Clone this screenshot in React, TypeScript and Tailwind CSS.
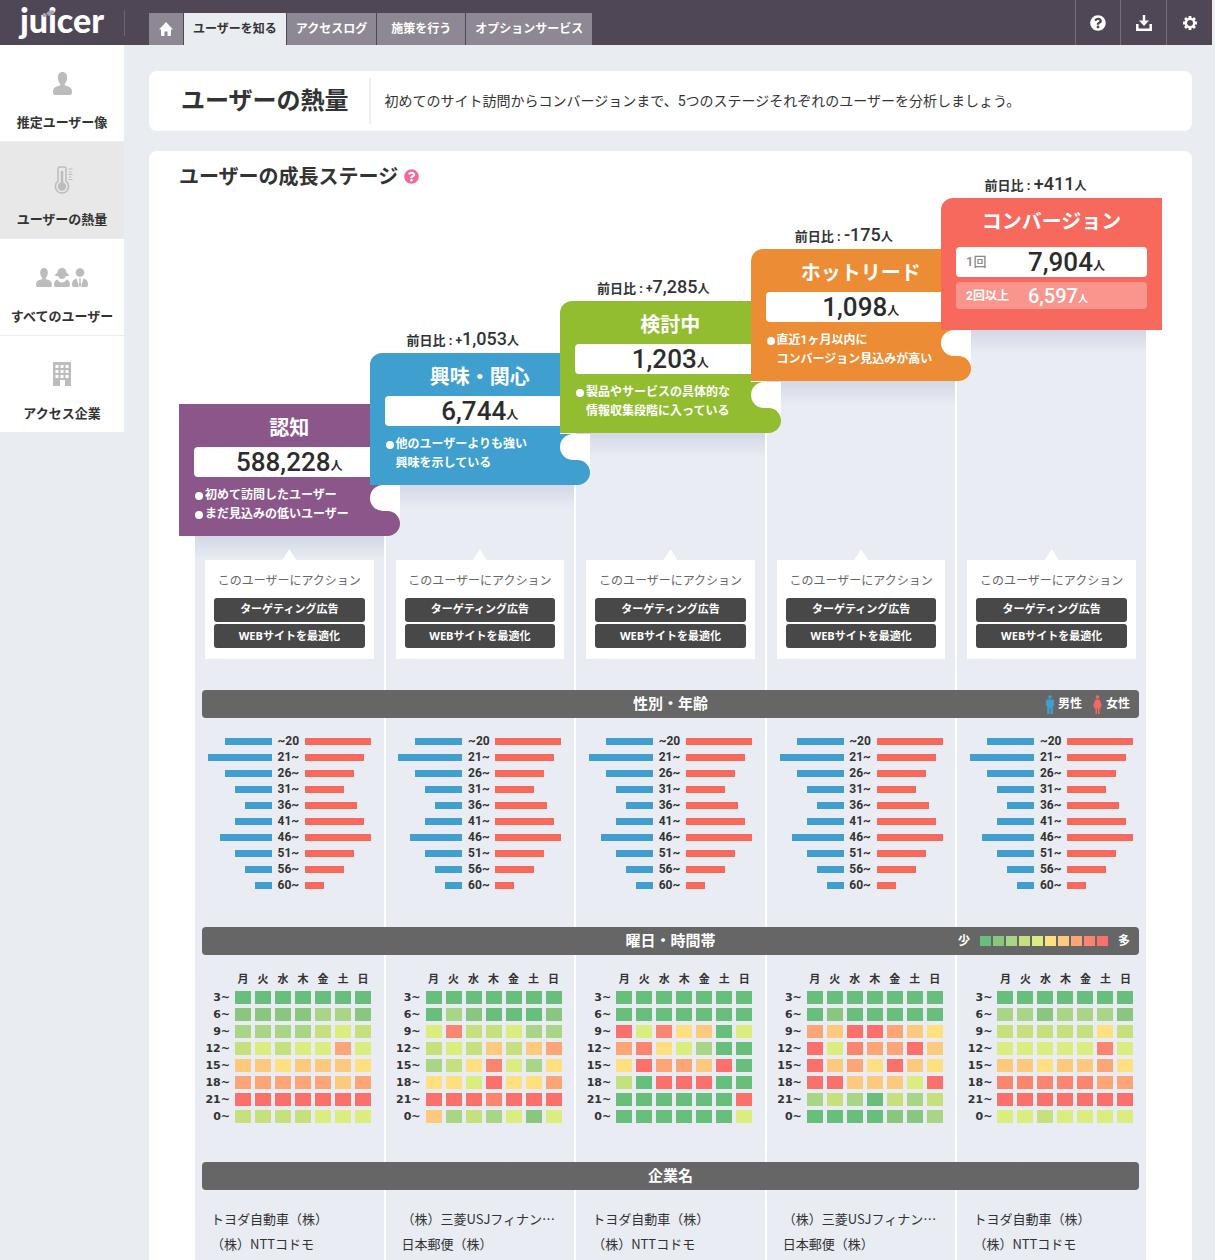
import { Fragment, type ReactNode } from "react";
import { FaQuestionCircle } from "react-icons/fa";

interface Stage {
  title: string;
  count: string;
  sign?: string;
  smallSign?: boolean;
  diff?: string;
  notes: string[];
  bullets: boolean;
  color: string;
  offset: string;
  columnTop: string;
}

const stages: Stage[] = [
  {
    title: "認知",
    count: "588,228",
    notes: ["初めて訪問したユーザー", "まだ見込みの低いユーザー"],
    bullets: true,
    color: "bg-[#8b578b]",
    offset: "mt-[221px]",
    columnTop: "mt-[385px] col-start-1",
  },
  {
    title: "興味・関心",
    count: "6,744",
    sign: "+",
    smallSign: true,
    diff: "1,053",
    notes: ["他のユーザーよりも強い", "興味を示している"],
    bullets: false,
    color: "bg-[#3fa0cf]",
    offset: "mt-[170px]",
    columnTop: "mt-[334px] col-start-2",
  },
  {
    title: "検討中",
    count: "1,203",
    sign: "+",
    smallSign: true,
    diff: "7,285",
    notes: ["製品やサービスの具体的な", "情報収集段階に入っている"],
    bullets: false,
    color: "bg-[#92bd31]",
    offset: "mt-[118px]",
    columnTop: "mt-[282px] col-start-3",
  },
  {
    title: "ホットリード",
    count: "1,098",
    sign: "-",
    diff: "175",
    notes: ["直近1ヶ月以内に", "コンバージョン見込みが高い"],
    bullets: false,
    color: "bg-[#ec8d35]",
    offset: "mt-[66px]",
    columnTop: "mt-[230px] col-start-4",
  },
  {
    title: "コンバージョン",
    count: "7,904",
    sign: "+",
    diff: "411",
    notes: [],
    bullets: false,
    color: "bg-[#f7685d]",
    offset: "mt-[15px]",
    columnTop: "mt-[179px] col-start-5",
  },
];

const ages = [
  { label: "~20", male: 47, female: 66 },
  { label: "21~", male: 64, female: 59 },
  { label: "26~", male: 47, female: 49 },
  { label: "31~", male: 37, female: 39 },
  { label: "36~", male: 27, female: 52 },
  { label: "41~", male: 37, female: 59 },
  { label: "46~", male: 52, female: 66 },
  { label: "51~", male: 37, female: 49 },
  { label: "56~", male: 27, female: 39 },
  { label: "60~", male: 17, female: 19 },
];

const levels = [
  "bg-[#68be7b]",
  "bg-[#88c77d]",
  "bg-[#a9d586]",
  "bg-[#c6e07d]",
  "bg-[#dced80]",
  "bg-[#fee081]",
  "bg-[#fdca7d]",
  "bg-[#fca677]",
  "bg-[#fb866f]",
  "bg-[#f9716a]",
];

const days = ["月", "火", "水", "木", "金", "土", "日"];
const hours = ["3~", "6~", "9~", "12~", "15~", "18~", "21~", "0~"];

// one string per hour, one digit (level) per day
const heat = [
  ["0000000", "1111221", "2222343", "3434474", "6656665", "7777767", "9999999", "3333444"],
  ["0000000", "0210001", "4833422", "3436367", "2358425", "5549557", "9998999", "6232414"],
  ["0000000", "0000000", "9485604", "7854200", "5977690", "3099900", "0000009", "0000004"],
  ["0000000", "0100000", "7699765", "9487796", "9675965", "9966649", "2320323", "0000112"],
  ["0000000", "2212221", "3333353", "4444484", "6656675", "8888877", "9999999", "4434444"],
];

const toyota = ["トヨダ自動車（株）", "（株）NTTコドモ"];
const mitsubishi = ["（株）三菱USJフィナン…", "日本郵便（株）"];
const companies = [toyota, mitsubishi, toyota, mitsubishi, toyota];

function PersonIcon({ className }: { className?: string }) {
  return (
    <svg viewBox="0 0 20 24" className={className} fill="currentColor">
      <path d="M10 0c3 0 4.800 2.300 4.800 5.800 0 3-1 5.200-2.500 6.600v1.800c4.200.7 7.700 2 7.700 6.800 0 2-.6 3-2.400 3H2.400C.6 24 0 23 0 21c0-4.800 3.500-6.100 7.700-6.800v-1.800C6.200 11 5.200 8.800 5.200 5.800 5.200 2.300 7 0 10 0z" />
    </svg>
  );
}

function ThermometerIcon() {
  return (
    <svg viewBox="0 0 20 28" className="ml-1 h-7 w-5" fill="none" stroke="#bcbcbc">
      <path
        d="M4 2.500Q4 1 5.500 1h5Q12 1 12 2.500V15.200a6.600 6.600 0 1 1-8 0z"
        strokeWidth="1.500"
      />
      <path d="M8 5v15" strokeWidth="2.500" />
      <circle cx="8" cy="20.500" r="4.200" fill="#bcbcbc" stroke="none" />
      <path d="M14.500 3h4M15 6h2.500M14.500 8.500h4M15 11h2.500M14.500 13.500h4" />
    </svg>
  );
}

function PeopleIcon() {
  return (
    <div className="flex gap-0.5">
      <PersonIcon className="h-[19px] w-4" />
      <svg viewBox="0 0 16 19" className="h-[19px] w-4" fill="currentColor">
        <path d="M8 0c2.700 0 4.200 1.500 4.500 4.500l2.800 2.700c-1 1-2.400 1-3.500.8C11.300 9.700 10 11 8 11S4.700 9.700 4.200 8C3.100 8.200 1.700 8.200.7 7.200l2.800-2.700C3.800 1.500 5.300 0 8 0z" />
        <path d="M3.500 11.500C4.500 13.600 6 14.500 8 14.500s3.500-.9 4.500-3c2.300.9 3.500 2.500 3.500 5 0 1.800-.5 2.500-1.800 2.500H1.800C.5 19 0 18.300 0 16.500c0-2.500 1.200-4.100 3.500-5z" />
      </svg>
      <svg viewBox="0 0 16 19" className="h-[19px] w-4" fill="currentColor">
        <circle cx="8" cy="4.500" r="4.300" />
        <path d="M4.500 10.500L7 19H1.800C.5 19 0 18.300 0 16.500c0-3.500 1.500-5.300 4.500-6zM11.500 10.500L9 19h5.200c1.300 0 1.800-.7 1.800-2.500 0-3.500-1.500-5.300-4.500-6zM7 10.500h2l-.4 2.500.6 4L8 19l-1.200-2 .6-4z" />
      </svg>
    </div>
  );
}

function BuildingIcon() {
  return (
    <svg viewBox="0 0 18 24" className="h-6 w-[18px]">
      <path d="M0 0h18v24h-6v-6H7v6H0z" fill="#bcbcbc" />
      {[3, 8, 13].map((y) =>
        [3, 8, 13].map((x) => (
          <rect key={x + "-" + y} x={x - 0.5} y={y} width="3" height="3" fill="#fff" />
        ))
      )}
    </svg>
  );
}

function HomeIcon() {
  return (
    <svg viewBox="0 0 14 14" className="size-3.5" fill="currentColor">
      <path d="M7 0l7 7.500h-2V13q0 1-1 1H8.500V9.500h-3V14H3q-1 0-1-1V7.500H0z" />
    </svg>
  );
}

function DownloadIcon() {
  return (
    <svg viewBox="0 0 16 16" className="size-4" fill="none" stroke="#fff" strokeWidth="2.500">
      <path d="M1.300 9v5.700h13.400V9" />
      <path d="M8 0v7" />
      <path d="M3 5.500h10L8 11z" fill="#fff" stroke="none" />
    </svg>
  );
}

function GearIcon() {
  return (
    <svg viewBox="0 0 16 16" className="size-3.5" fill="none" stroke="#fff">
      <circle cx="8" cy="8" r="4.800" strokeWidth="2.800" />
      {[0, 45, 90, 135].map((a) => (
        <path key={a} d="M8 0v3M8 13v3" strokeWidth="3.200" transform={`rotate(${a} 8 8)`} />
      ))}
    </svg>
  );
}

function Header() {
  const tabs = ["ユーザーを知る", "アクセスログ", "施策を行う", "オプションサービス"];
  return (
    <header className="mr-[3px] flex h-[45px] bg-[#4f4656] text-white">
      <div className="flex w-[149px] items-center">
        <a
          href="#"
          className="relative flex h-[26px] w-[125px] items-center justify-center border-r border-[#6d6575] pb-1.5 font-[family-name:Lato,sans-serif] text-[34px] leading-none font-black"
        >
          juicer
          {/* leaf on top of the glass */}
          <svg viewBox="0 0 14 8" className="absolute top-0 left-[41px] h-2 w-3.5" fill="#a7a2ab">
            <ellipse cx="9.500" cy="3" rx="4" ry="2.500" transform="rotate(-20 9.500 3)" />
            <circle cx="3.500" cy="5" r="2" />
          </svg>
        </a>
      </div>
      <nav className="mt-[13px] flex gap-px text-xs font-bold">
        <a href="#" aria-label="ホーム" className="flex w-[34px] items-center justify-center bg-[#8d8893]">
          <HomeIcon />
        </a>
        {tabs.map((tab, i) => (
          <a
            key={tab}
            href="#"
            className={
              i === 0
                ? "flex items-center bg-[#e9edf2] px-[9px] text-[#333]"
                : i === 2
                  ? "flex items-center bg-[#8d8893] px-[14px]"
                  : "flex items-center bg-[#8d8893] px-[9px]"
            }
          >
            {tab}
          </a>
        ))}
      </nav>
      <div className="ml-auto flex">
        <button aria-label="ヘルプ" className="flex w-[45px] items-center justify-center border-l border-[#756d7c]">
          <FaQuestionCircle className="size-4" />
        </button>
        <button aria-label="ダウンロード" className="flex w-[46px] items-center justify-center border-l border-[#756d7c]">
          <DownloadIcon />
        </button>
        <button aria-label="設定" className="flex w-[46px] items-center justify-center border-l border-[#756d7c]">
          <GearIcon />
        </button>
      </div>
    </header>
  );
}

function Sidebar() {
  const items: { label: string; icon: ReactNode }[] = [
    { label: "推定ユーザー像", icon: <PersonIcon className="h-[23px] w-[19px]" /> },
    { label: "ユーザーの熱量", icon: <ThermometerIcon /> },
    { label: "すべてのユーザー", icon: <PeopleIcon /> },
    { label: "アクセス企業", icon: <BuildingIcon /> },
  ];
  return (
    <nav className="flex w-[124px] flex-none flex-col">
      {items.map((item, i) => (
        <a
          key={item.label}
          href="#"
          className={
            i === 1
              ? "flex flex-col items-center border-b border-[#e9edf2] bg-[#e8e8e8] pt-[21px] pb-2 text-[13px] leading-5 font-bold text-[#333]"
              : "flex flex-col items-center border-b border-[#e9edf2] bg-white pt-[21px] pb-2 text-[13px] leading-5 font-bold text-[#333]"
          }
        >
          <span className="flex h-[34px] items-center text-[#bcbcbc]">{item.icon}</span>
          <span className="mt-[13px] whitespace-nowrap">{item.label}</span>
        </a>
      ))}
    </nav>
  );
}

function StageCard({ stage, last }: { stage: Stage; last: boolean }) {
  return (
    <div className={`${stage.offset} ${last ? "w-[221px] flex-none" : "min-w-0 flex-1"}`}>
      <div className="h-8 text-center text-[13px] leading-9 font-bold whitespace-nowrap text-[#333]">
        {stage.diff && (
          <span className={last ? "mr-8" : "mr-1"}>
            前日比 :{" "}
            <span className={stage.smallSign ? "text-xs" : "text-lg font-medium"}>{stage.sign}</span>
            <span className="text-lg leading-9 font-medium">{stage.diff}</span>
            <span className="text-xs">人</span>
          </span>
        )}
      </div>
      <div className={`relative h-[132px] text-white ${stage.color} ${stage.sign ? "rounded-tl-xl" : ""}`}>
        {last ? (
          <div className="px-[15px] pt-[9px]">
            <h3 className="text-center text-xl leading-[30px] font-bold">{stage.title}</h3>
            <div className="mt-2.5 flex h-[30px] items-center rounded bg-white pl-2.5 text-[#2c2c2c]">
              <span className="w-[62px] text-[13px] font-medium text-[#888]">1回</span>
              <span className="text-[26px] leading-[30px] font-medium">{stage.count}</span>
              <span className="mt-2 text-xs font-bold">人</span>
            </div>
            <div className="mt-[5px] flex h-[27px] items-center rounded bg-[#fa958e] pl-2.5">
              <span className="w-[62px] text-xs leading-5 font-bold">2回以上</span>
              <span className="text-xl font-medium">6,597</span>
              <span className="mt-1.5 text-[10px] font-bold">人</span>
            </div>
          </div>
        ) : (
          <div className="pt-[9px] pl-[15px]">
            <h3 className="pl-[15px] text-center text-xl leading-[30px] font-bold">{stage.title}</h3>
            <div className="mt-1 flex h-[30px] items-center justify-center rounded-l bg-white pl-[15px] text-[#2c2c2c]">
              <span className="text-[26px] leading-[30px] font-medium">{stage.count}</span>
              <span className="mt-2 text-xs font-bold">人</span>
            </div>
            <ul className="mt-[9px] pl-px text-xs leading-[19px] font-bold whitespace-nowrap">
              {stage.notes.map((note, i) => (
                <li key={note} className="flex items-center gap-0.5">
                  <span className={`size-2 rounded-full ${i === 0 || stage.bullets ? "bg-white" : ""}`} />
                  {note}
                </li>
              ))}
            </ul>
          </div>
        )}
        {/* curl that runs under the next step */}
        {!last && (
          <div className="absolute top-[81px] left-full w-[30px]">
            <div className={`h-[26px] ${stage.color}`}>
              <div className="h-full rounded-l-full bg-white" />
            </div>
            <div className="h-[25px] bg-linear-to-b from-white from-50% to-transparent to-50%">
              <div className={`h-full rounded-r-full ${stage.color}`} />
            </div>
          </div>
        )}
      </div>
    </div>
  );
}

function SectionBar({ title, className, children }: { title: string; className: string; children?: ReactNode }) {
  return (
    <div
      className={`z-10 col-span-full mx-[7px] grid h-7 grid-cols-[1fr_auto_1fr] items-center rounded bg-[#666] px-[9px] text-white ${className}`}
    >
      <h3 className="col-start-2 text-[15px] font-bold">{title}</h3>
      <div className="flex items-center justify-end text-xs font-bold">{children}</div>
    </div>
  );
}

function ActionCard() {
  return (
    <div className="mx-2.5 mt-3">
      <div className="mx-auto h-3 w-3.5 bg-white [clip-path:polygon(50%_10%,100%_100%,0_100%)]" />
      <div className="flex h-[99px] flex-col items-center bg-white px-[9px] pt-[11px]">
        <p className="text-xs leading-5 whitespace-nowrap text-[#666]">このユーザーにアクション</p>
        <button className="mt-[7px] h-6 w-full rounded-[3px] bg-[#484848] text-[11px] leading-6 font-bold text-white">
          ターゲティング広告
        </button>
        <button className="mt-0.5 h-6 w-full rounded-[3px] bg-[#484848] font-[family-name:'Open_Sans','Noto_Sans_CJK_JP',sans-serif] text-[11px] leading-6 font-bold text-white">
          WEBサイトを最適化
        </button>
      </div>
    </div>
  );
}

function AgeChart() {
  return (
    <div className="mt-[15px] grid h-40 grid-cols-[77fr_33px_79fr] items-center text-xs leading-4 font-bold text-[#333]">
      {ages.map((age) => (
        <Fragment key={age.label}>
          <div className="ml-auto h-[7px] bg-[#3fa0cf]" style={{ width: age.male }} />
          <span className="text-center">{age.label}</span>
          <div className="h-[7px] bg-[#f7685d]" style={{ width: age.female }} />
        </Fragment>
      ))}
    </div>
  );
}

function HeatTable({ rows }: { rows: string[] }) {
  return (
    <table className="mt-[15px] w-[178px] table-fixed text-[11px] font-bold text-[#333]">
      <thead>
        <tr className="h-[19px]">
          <td className="w-[38px] p-0" />
          {days.map((d) => (
            <th key={d} className="p-0 leading-[17px]">
              {d}
            </th>
          ))}
        </tr>
      </thead>
      <tbody>
        {rows.map((row, i) => (
          <tr key={hours[i]} className="h-[17px]">
            <th className="p-0 pr-[3px] text-right font-[family-name:'DejaVu_Sans',sans-serif] leading-[17px] whitespace-nowrap">
              {hours[i]}
            </th>
            {row.split("").map((level, j) => (
              <td key={j} className="p-0">
                <div className={`mx-auto h-[13px] w-4 ${levels[Number(level)]}`} />
              </td>
            ))}
          </tr>
        ))}
      </tbody>
    </table>
  );
}

function StagePanel() {
  return (
    <section className="mt-5 grid flex-1 grid-cols-5 grid-rows-[repeat(7,auto)_1fr] gap-x-0.5 rounded-t-lg bg-white px-[46px]">
      {stages.map((stage) => (
        <div
          key={stage.title}
          className={`row-start-1 row-end-9 bg-[#e9ecf2] bg-linear-to-b from-[#d4d8e5] to-[#e9ecf2] to-[24px] ${stage.columnTop}`}
        />
      ))}
      <div className="col-start-1 col-end-4 row-start-1 -ml-4 flex h-[51px] items-center gap-1.5 self-start">
        <h2 className="text-xl font-bold text-[#333]">ユーザーの成長ステージ</h2>
        <FaQuestionCircle className="size-[15px] text-[#f4679d]" />
      </div>
      <div className="z-10 col-span-full row-start-1 -mx-4 flex h-[385px] items-start">
        {stages.map((stage, i) => (
          <StageCard key={stage.title} stage={stage} last={i === stages.length - 1} />
        ))}
      </div>
      <div className="col-span-full row-start-2 grid grid-cols-5 gap-x-0.5">
        {stages.map((stage) => (
          <ActionCard key={stage.title} />
        ))}
      </div>
      <SectionBar title="性別・年齢" className="row-start-3 mt-[31px]">
        <svg viewBox="0 0 8 19" className="h-[19px] w-2" fill="#3fa0cf">
          <circle cx="4" cy="2" r="1.800" />
          <path d="M1 4.500h6l1 1V11H6.800v8H4.500v-6h-1v6H1.200v-8H0V5.500z" />
        </svg>
        <span className="ml-1">男性</span>
        <svg viewBox="0 0 9 19" className="ml-[11px] h-[19px] w-[9px]" fill="#f7685d">
          <circle cx="4.500" cy="2" r="1.800" />
          <path d="M2.500 4.500h4L9 11l-1.500.5L8 13.500H6.500V19H5v-5.500H4V19H2.500v-5.500H1l.5-2L0 11z" />
        </svg>
        <span className="ml-1">女性</span>
      </SectionBar>
      <div className="col-span-full row-start-4 grid grid-cols-5 gap-x-0.5">
        {stages.map((stage) => (
          <AgeChart key={stage.title} />
        ))}
      </div>
      <SectionBar title="曜日・時間帯" className="row-start-5 mt-[34px]">
        <span>少</span>
        <div className="mx-2.5 flex gap-0.5">
          {levels.map((level) => (
            <span key={level} className={`h-2.5 w-[11px] ${level}`} />
          ))}
        </div>
        <span>多</span>
      </SectionBar>
      <div className="col-span-full row-start-6 grid grid-cols-5 gap-x-0.5">
        {heat.map((rows, i) => (
          <HeatTable key={i} rows={rows} />
        ))}
      </div>
      <SectionBar title="企業名" className="row-start-7 mt-[37px]" />
      <div className="col-span-full row-start-8 mt-4 grid grid-cols-5 gap-x-0.5">
        {companies.map((names, i) => (
          <ul
            key={i}
            className="pl-4 font-[family-name:'Noto_Sans_CJK_JP',sans-serif] text-[13px] leading-[25px] whitespace-nowrap text-[#333]"
          >
            {names.map((name) => (
              <li key={name}>{name}</li>
            ))}
          </ul>
        ))}
      </div>
    </section>
  );
}

export default function App() {
  return (
    <div
      lang="ja"
      className="flex min-h-screen flex-col bg-[#e9edf2] font-[family-name:Roboto,'Noto_Sans_CJK_JP',sans-serif]"
    >
      <Header />
      <div className="flex flex-1">
        <Sidebar />
        <main className="mr-[23px] ml-[25px] flex min-w-0 flex-1 flex-col pt-[26px]">
          <section className="flex h-[60px] items-center rounded-lg bg-white pl-8">
            <h1 className="text-2xl font-bold text-[#333]">ユーザーの熱量</h1>
            <p className="ml-5 border-l-2 border-[#eeeef5] pl-3.5 text-sm leading-[46px] text-[#333]">
              初めてのサイト訪問からコンバージョンまで、5つのステージそれぞれのユーザーを分析しましょう。
            </p>
          </section>
          <StagePanel />
        </main>
      </div>
    </div>
  );
}
